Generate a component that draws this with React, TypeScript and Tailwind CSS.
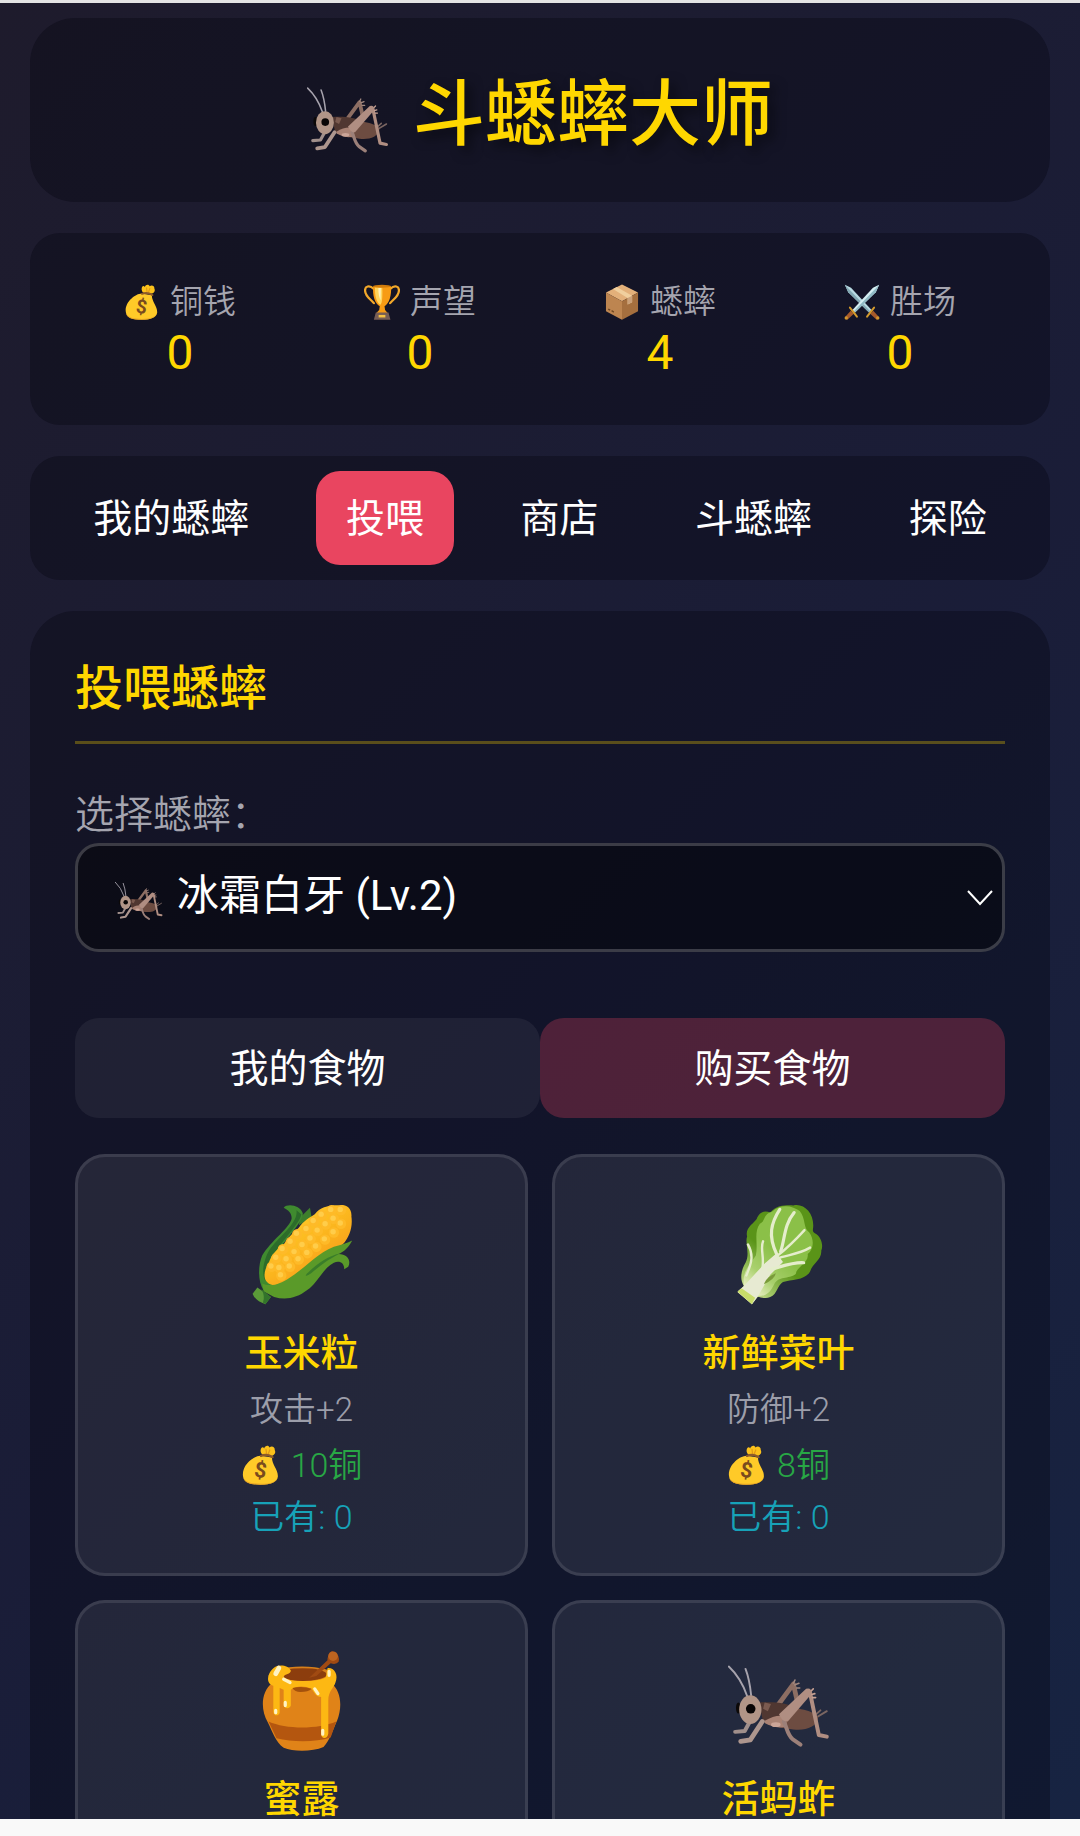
import { useState } from 'react';
import type { ReactNode } from 'react';

interface IconProps {
  className?: string;
}

interface Food {
  name: string;
  effect: string;
  price: number;
  owned: number;
  icon: ReactNode;
}

function CricketIcon({ className }: IconProps) {
  return (
    <svg viewBox="0 0 128 128" className={className} aria-hidden>
      <g fill="none" strokeLinecap="round" strokeLinejoin="round">
        <path d="M1 22Q16 36 24 59M22 25Q27 38 29 58" stroke="#a7a3ad" strokeWidth="2.4" />
        <path d="M60 74L82 44L87 66" stroke="#8d6e63" strokeWidth="6" />
        <path d="M82 43l2-4M84 45l5-2M86 49l4 0" stroke="#a1887f" strokeWidth="2" />
        <path d="M104 90L124 78M108 84L116 77" stroke="#7b6662" strokeWidth="2.4" />
      </g>
      <ellipse cx="13" cy="74" rx="3" ry="7" fill="#0c0908" />
      <path d="M44 77C64 68 114 76 113 87C111 98 97 103 82 101C64 99 50 94 44 91Z" fill="#6d4c41" />
      <path d="M39 67C58 66 76 67 88 76L66 86L44 91Z" fill="#503731" />
      <path d="M46 67L54 69L50 78L44 75Z" fill="#7b5b50" />
      <path d="M46 90C56 84 66 82 73 85L74 97C63 101 54 97 46 93Z" fill="#a98274" />
      <g fill="none" strokeLinecap="round" strokeLinejoin="round">
        <path d="M27 92L21 103L9 104" stroke="#a08f8b" strokeWidth="5" />
        <path d="M43 91L28 114L16 116" stroke="#ad968e" strokeWidth="6" />
        <path d="M70 91C74 98 74 107 81 113L91 120" stroke="#9c8079" strokeWidth="5" />
        <path d="M103 55L114 108L124 110" stroke="#b08e82" strokeWidth="5" />
        <path d="M103 54l4-4M105 57l4-1M106 61l4 0" stroke="#c7a294" strokeWidth="2" />
      </g>
      <path d="M64 82L98 50Q105 48 105 56L75 91Q68 92 64 82Z" fill="#b08e82" />
      <ellipse cx="28" cy="76" rx="14" ry="18" fill="#b19587" />
      <circle cx="28.5" cy="75" r="6" fill="#080505" />
      <ellipse cx="60" cy="95" rx="6" ry="3" fill="#cba598" />
    </svg>
  );
}

function MoneyBagIcon({ className }: IconProps) {
  return (
    <svg viewBox="0 0 128 128" className={className} aria-hidden>
      <path d="M66 28C60 20 63 6 70 7C73 8 74 11 74 11C77 1 89 0 91 8C98 2 109 6 108 16C112 24 108 31 100 34L74 34Z" fill="#fcc21b" />
      <path d="M80 14L82 29M92 16L87 29" stroke="#e29a18" strokeWidth="4" strokeLinecap="round" />
      <path d="M62 34C42 35 5 61 6 96C7 120 28 127 62 127C96 127 116 119 118 101C119 78 99 64 99 40Z" fill="#ffca28" />
      <path d="M118 98C115 118 96 124 64 124C34 124 14 119 7 103C10 121 30 127 62 127C96 127 116 119 118 98Z" fill="#e8a325" />
      <path d="M64 35Q82 27 101 39" fill="none" stroke="#8d5a2b" strokeWidth="7" strokeLinecap="round" />
      <text x="62" y="104" textAnchor="middle" fontSize="68" fontWeight="700" fontFamily="Roboto, sans-serif" fill="#794a1e" transform="rotate(8 62 84)">
        $
      </text>
    </svg>
  );
}

function TrophyIcon({ className }: IconProps) {
  return (
    <svg viewBox="0 0 128 128" className={className} aria-hidden>
      <path d="M34 17C20 3 2 7 4 25C6 45 20 50 35 68M94 17C108 3 126 7 124 25C122 45 108 50 93 68" fill="none" stroke="#f2a82a" strokeWidth="8" strokeLinecap="round" />
      <path d="M33 8H96C99 40 89 70 73 79L75 92L84 103H44L54 92L56 79C39 70 29 40 33 8Z" fill="#f79b14" />
      <path d="M39 12H65C66 42 65 68 58 74C45 66 38 42 39 12Z" fill="#ffd45c" />
      <path d="M51 14H60L59 58Q51 43 51 14Z" fill="#fff0b6" />
      <ellipse cx="64" cy="8" rx="32" ry="5" fill="#d17c0b" />
      <path d="M42 101H87L94 127H35Z" fill="#775d55" />
      <path d="M52 110H76V119H52Z" fill="#f6c144" />
    </svg>
  );
}

function PackageIcon({ className }: IconProps) {
  return (
    <svg viewBox="0 0 128 128" className={className} aria-hidden>
      <path d="M64 2L121 30L64 61L7 30Z" fill="#e3b07a" />
      <path d="M7 30L64 61V127L7 97Z" fill="#bd8550" />
      <path d="M121 30L64 61V127L121 97Z" fill="#a56f3e" />
      <path d="M32 18L45 11L100 42V65L84 73V50Z" fill="#f0cf9e" />
      <path d="M84 50L100 42V65L84 73Z" fill="#caa079" />
      <path d="M15 89l7 4M27 95l8 5" stroke="#714823" strokeWidth="5" />
    </svg>
  );
}

function SwordsIcon({ className }: IconProps) {
  return (
    <svg viewBox="0 0 128 128" className={className} aria-hidden>
      <path d="M3 3L25 13L98 92L89 101L15 29Z" fill="#b9dbe3" />
      <path d="M3 3L93 97L89 101L15 29Z" fill="#83a9b4" />
      <path d="M93 106L104 95L125 118L116 127Z" fill="#a65a2a" />
      <path d="M82 116Q91 104 107 84" fill="none" stroke="#d59b2c" strokeWidth="7" strokeLinecap="round" />
      <path d="M125 3L103 13L30 92L39 101L113 29Z" fill="#d5eef2" />
      <path d="M125 3L35 97L39 101L113 29Z" fill="#8fb9c4" />
      <path d="M35 106L24 95L3 118L12 127Z" fill="#a65a2a" />
      <path d="M46 116Q37 104 21 84" fill="none" stroke="#d59b2c" strokeWidth="7" strokeLinecap="round" />
      <circle cx="8" cy="121" r="6" fill="#d2952c" />
      <circle cx="120" cy="121" r="6" fill="#d2952c" />
    </svg>
  );
}

const kernels = [
  [113, 9], [101, 9], [89, 15], [79, 23], [70, 33], [58, 39], [50, 49], [40, 58], [32, 69], [26, 80],
  [104, 20], [94, 27], [84, 35], [75, 45], [65, 53], [55, 62], [45, 71], [36, 82],
  [113, 26], [104, 37], [93, 46], [82, 55], [71, 63], [60, 71], [49, 80], [38, 91],
];

function CornIcon({ className }: IconProps) {
  return (
    <svg viewBox="0 0 128 128" className={className} aria-hidden>
      <defs>
        <linearGradient id="cornBody" x1="0.3" y1="0.2" x2="0.8" y2="0.8">
          <stop offset="0" stopColor="#ffca28" />
          <stop offset="0.5" stopColor="#fbb41d" />
          <stop offset="1" stopColor="#f79a1c" />
        </linearGradient>
      </defs>
      <path d="M74 6L62 18L60 28L76 18Z" fill="#3d7f2c" />
      <path d="M41 6C46 0 62 3 65 13C66 26 30 57 21 84L30 114L16 110C8 98 9 78 14 66C24 48 50 30 51 19C51 13 47 9 41 6Z" fill="#3f8a2f" />
      <path d="M63 14C62 27 29 55 20 82L18 98C12 87 17 69 23 59C34 43 60 25 57 9Z" fill="#2c6c2a" />
      <path d="M112 3C118 1 127 6 126 17C128 31 123 42 117 50C104 63 86 77 69 87C53 98 35 106 24 102C14 98 16 84 22 76C26 63 34 57 41 52C48 41 54 37 60 31C66 22 74 18 80 14C87 5 99 2 112 3Z" fill="url(#cornBody)" />
      {kernels.map(([x, y]) => (
        <g key={`${x}-${y}`}>
          <circle cx={x} cy={y} r="6.5" fill="#feba28" />
          <circle cx={x - 1} cy={y - 1} r="3.4" fill="#ffcd4a" />
        </g>
      ))}
      <path d="M127 47C123 55 117 61 110 64C121 64 126 72 122 80L117 83C117 75 111 72 104 75C91 81 84 100 71 109C57 120 43 122 29 118L16 111L14 101C25 106 38 101 48 94C67 83 83 63 104 55C114 52 121 50 127 47Z" fill="#5a9a29" />
      <path d="M113 63C97 66 85 75 73 86C63 95 73 91 78 86C91 75 103 67 113 63Z" fill="#3a7d2a" />
      <path d="M8 106L25 118L18 127C11 125 4 120 2 114Z" fill="#5a9a38" />
      <path d="M13 108L25 118L18 127L15 125Q18 117 13 108Z" fill="#33742b" />
    </svg>
  );
}

function LettuceIcon({ className }: IconProps) {
  return (
    <svg viewBox="0 0 128 128" className={className} aria-hidden>
      <defs>
        <linearGradient id="leafBase" x1="0.7" y1="0.3" x2="0.2" y2="1">
          <stop offset="0.4" stopColor="#5a9418" />
          <stop offset="0.8" stopColor="#a5c96a" />
          <stop offset="1" stopColor="#dde7a6" />
        </linearGradient>
        <linearGradient id="leafFront" x1="0.7" y1="0.2" x2="0.2" y2="1">
          <stop offset="0.4" stopColor="#8bc048" />
          <stop offset="0.75" stopColor="#a9d06d" />
          <stop offset="1" stopColor="#e7efc0" />
        </linearGradient>
      </defs>
      <path d="M82 3C95 0 107 12 107 28C107 34 105 35 109 38C117 42 120 53 117 60C118 71 106 76 103 86C97 97 80 96 69 99C62 103 62 114 53 118C47 121 42 118 37 118L30 127L12 112L20 104C14 95 17 83 22 75C28 64 21 50 24 42C21 31 33 25 36 20C40 9 48 10 53 12C62 2 72 3 82 3Z" fill="url(#leafBase)" />
      <path d="M55 11C67 0 82 4 90 10C98 20 94 31 102 37C109 47 107 59 100 64C102 75 86 80 85 89C76 96 63 91 58 102C52 115 44 119 35 115L20 104C17 86 28 77 35 66C38 50 32 37 40 26C48 22 43 15 55 11Z" fill="url(#leafFront)" />
      <path d="M12 111L20 104L46 76L61 63L69 74L53 90L37 118L30 127Z" fill="#e7ead2" />
      <g fill="none" stroke="#e5edcc" strokeWidth="3" strokeLinecap="round">
        <path d="M65 8C54 25 50 41 61 64" strokeWidth="4" />
        <path d="M83 12C70 28 72 43 66 61" strokeWidth="4" />
        <path d="M96 34C86 45 75 56 61 67" />
        <path d="M103 56C88 65 73 65 61 70" />
        <path d="M95 75C81 74 67 80 51 84" strokeWidth="4" />
        <path d="M44 48C40 57 46 68 43 83M25 52C33 66 29 77 23 91" />
      </g>
      <path d="M45 102C48 94 53 91 60 88Q59 95 45 102Z" fill="#7a9b3a" />
      <path d="M12 111L17 107L34 119L30 127Z" fill="#c8dc69" />
    </svg>
  );
}

function HoneyIcon({ className }: IconProps) {
  return (
    <svg viewBox="0 0 128 128" className={className} aria-hidden>
      <path d="M27 42C12 54 12 76 21 92C27 104 31 117 41 124C53 129 77 129 91 123C99 114 103 101 108 90C115 72 113 53 101 43Z" fill="#e08318" />
      <path d="M22 91C44 101 84 101 107 91L100 111C81 117 53 117 32 112Z" fill="#b4560f" />
      <ellipse cx="64" cy="34" rx="42" ry="12" fill="#d8801b" />
      <ellipse cx="65" cy="32" rx="30" ry="8" fill="#8c3d0d" />
      <path d="M27 25C33 18 47 20 50 27C50 32 42 31 41 35C50 43 88 41 94 35L96 24C105 23 110 33 106 42C104 49 97 53 97 64V106C96 114 88 113 88 107V60C82 61 79 54 76 50C67 46 57 46 50 51V71C48 76 42 75 41 70V51L36 49V80C34 85 29 84 28 79V46C18 43 21 31 27 25Z" fill="#fdb813" />
      <path d="M52 49Q64 46 76 50Q72 54 62 54Q55 54 52 49Z" fill="#a4510c" />
      <path d="M96 12Q98 2 103 3Q112 7 110 16Q107 20 100 18L82 34L73 36L96 14Z" fill="#a04a12" />
      <circle cx="103" cy="9" r="6" fill="#bd6420" />
      <g fill="none" stroke="#fff3c4" strokeLinecap="round">
        <path d="M31 31L35 24" strokeWidth="6" />
        <path d="M41 38L49 42M80 50L84 56" strokeWidth="4" />
        <path d="M98 28V33M43 67V71M31 77V80M90 102V107" strokeWidth="4" />
      </g>
    </svg>
  );
}

const stats = [
  { label: '铜钱', value: 0, icon: <MoneyBagIcon className="size-9" /> },
  { label: '声望', value: 0, icon: <TrophyIcon className="size-9" /> },
  { label: '蟋蟀', value: 4, icon: <PackageIcon className="size-9" /> },
  { label: '胜场', value: 0, icon: <SwordsIcon className="size-9" /> },
];

const sections = ['我的蟋蟀', '投喂', '商店', '斗蟋蟀', '探险'];
const foodTabs = ['我的食物', '购买食物'];

const foods: Food[] = [
  { name: '玉米粒', effect: '攻击+2', price: 10, owned: 0, icon: <CornIcon className="size-[102px]" /> },
  { name: '新鲜菜叶', effect: '防御+2', price: 8, owned: 0, icon: <LettuceIcon className="size-[102px]" /> },
  { name: '蜜露', effect: '体力+5', price: 20, owned: 0, icon: <HoneyIcon className="size-[102px]" /> },
  { name: '活蚂蚱', effect: '攻击+5', price: 30, owned: 0, icon: <CricketIcon className="size-[102px]" /> },
];

function FoodCard({ food }: { food: Food }) {
  return (
    <button
      type="button"
      className="flex flex-col items-center rounded-[30px] border-3 border-white/10 bg-white/8 px-6 pt-[46px] pb-[30px]"
    >
      {food.icon}
      <span className="mt-5 text-[38px] leading-[56px] font-medium text-[#ffd700]">{food.name}</span>
      <span className="mt-1 text-[33px] leading-[50px] font-[350] text-[#9c9eaa]">{food.effect}</span>
      <span className="mt-1 flex items-center gap-[10px] text-[34px] leading-[52px] font-[350] text-[#28a745]">
        <MoneyBagIcon className="size-10" />
        <span>{food.price}铜</span>
      </span>
      <span className="text-[34px] leading-[52px] font-[350] text-[#17a2b8]">已有: {food.owned}</span>
    </button>
  );
}

export default function App() {
  const [section, setSection] = useState('投喂');
  const [foodTab, setFoodTab] = useState('购买食物');

  return (
    <div className="flex h-screen flex-col border-t-3 border-b-17 border-t-[#e4e4e4] border-b-[#f9f9f9] font-[Roboto,'Noto_Sans_CJK_SC',sans-serif] text-white">
      <div className="min-h-0 flex-1 overflow-y-auto [scrollbar-width:none]">
        <div className="flex flex-col gap-[31px] bg-linear-135 from-[#1e1b2c] via-[#1a1d38] to-[#162544] px-[30px] pt-[15px] pb-[30px]">
          <header className="flex items-center justify-center gap-6 rounded-[45px] bg-[#02040c]/32 pt-[43px] pb-[33px]">
            <CricketIcon className="size-[82px]" />
            <h1 className="text-[72px] leading-[108px] font-medium text-[#ffd700] [text-shadow:6px_6px_12px_rgba(0,0,0,0.5)]">
              斗蟋蟀大师
            </h1>
          </header>

          <dl className="grid grid-cols-4 rounded-[30px] bg-[#02040c]/32 px-[30px] pt-11 pb-[46px]">
            {stats.map((stat) => (
              <div key={stat.label} className="flex flex-col items-center">
                <dt className="flex items-center gap-[10px] text-[33px] leading-[50px] font-[350] text-[#a5a5af]">
                  {stat.icon}
                  {stat.label}
                </dt>
                <dd className="text-[48px] leading-[52px] text-[#ffd700]">{stat.value}</dd>
              </div>
            ))}
          </dl>

          <nav className="flex justify-around rounded-[30px] bg-[#02040c]/32 p-[15px]">
            {sections.map((name) => (
              <button
                key={name}
                type="button"
                onClick={() => setSection(name)}
                className={`rounded-[24px] px-[30px] pt-[19px] pb-[17px] text-[39px] leading-[58px] ${
                  section === name ? 'bg-[#e94560]' : ''
                }`}
              >
                {name}
              </button>
            ))}
          </nav>

          <main className="rounded-[45px] bg-[#02040c]/32 p-[45px]">
            <h2 className="border-b-3 border-[#ffd700]/30 pb-5 text-[48px] leading-[65px] font-medium text-[#ffd700]">
              投喂蟋蟀
            </h2>

            <label htmlFor="cricket" className="mt-[43px] block text-[39px] leading-[56px] font-[350] text-[#a5a5af]">
              选择蟋蟀：
            </label>
            <div className="relative">
              <select
                id="cricket"
                className="block h-[109px] w-full appearance-none rounded-[24px] border-3 border-white/20 bg-black/40 pb-1 pl-[99px] text-[42px] text-white"
              >
                <option>冰霜白牙 (Lv.2)</option>
              </select>
              <CricketIcon className="pointer-events-none absolute inset-y-0 left-10 my-auto size-12" />
              <svg
                viewBox="0 0 26 16"
                className="pointer-events-none absolute inset-y-0 right-3 my-auto h-4 w-[26px]"
                aria-hidden
              >
                <path d="M1 1L13 14L25 1" fill="none" stroke="#fff" strokeWidth="2" />
              </svg>
            </div>

            <div className="mt-[66px] grid grid-cols-2">
              {foodTabs.map((name) => (
                <button
                  key={name}
                  type="button"
                  onClick={() => setFoodTab(name)}
                  className={`rounded-[24px] pt-[22px] pb-5 text-[39px] leading-[58px] ${
                    foodTab === name ? 'bg-[#e94560]/28' : 'bg-white/6'
                  }`}
                >
                  {name}
                </button>
              ))}
            </div>

            <div className="mt-9 grid grid-cols-2 gap-6">
              {foods.map((food) => (
                <FoodCard key={food.name} food={food} />
              ))}
            </div>
          </main>
        </div>
      </div>
    </div>
  );
}
